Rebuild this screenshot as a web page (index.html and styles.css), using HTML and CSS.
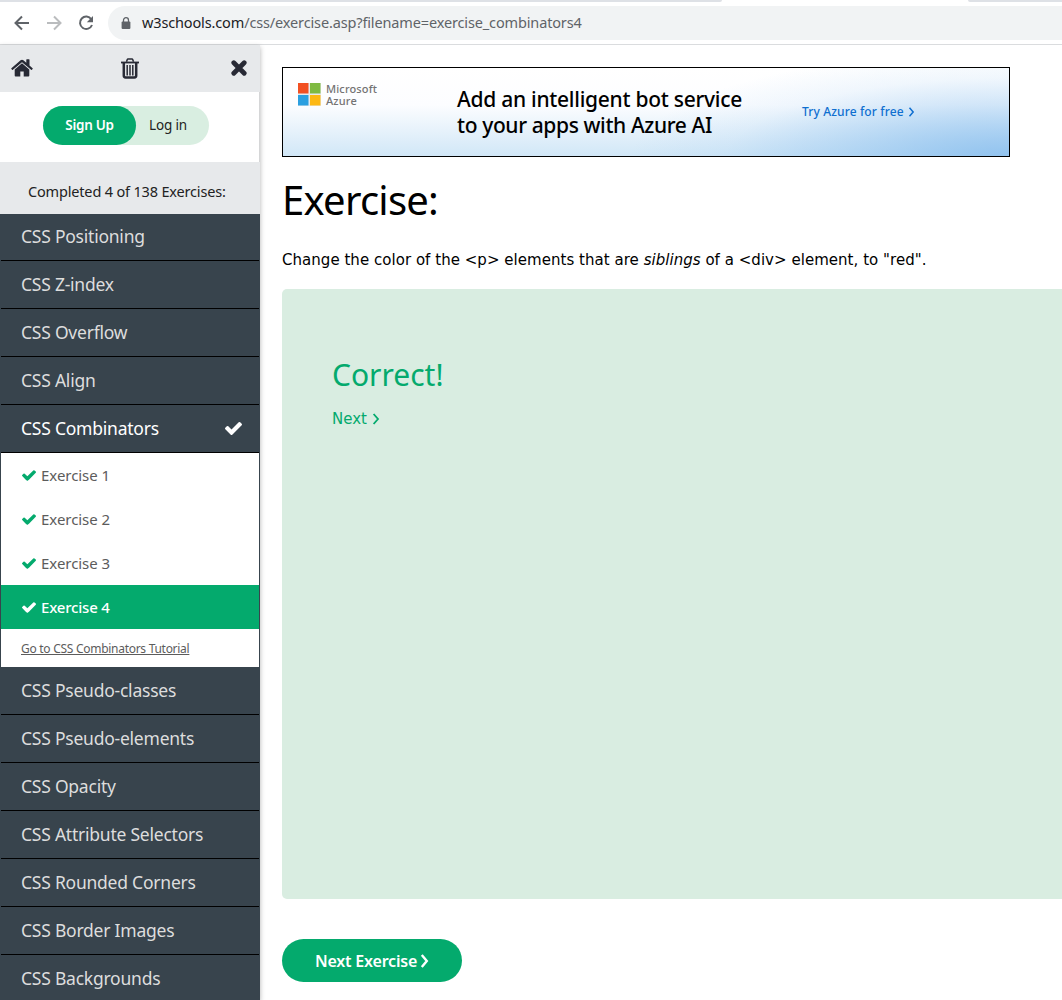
FILE: index.html
```html
<!DOCTYPE html>
<html lang="en">
<head>
<meta charset="utf-8">
<title>Exercise</title>
<link rel="stylesheet" href="styles.css">
</head>
<body>
<svg class="defs" width="0" height="0" aria-hidden="true">
  <symbol id="check" viewBox="0 0 1550 1188"><path d="M1550 232q0 40-28 68L798 1024l-136 136q-28 28-68 28t-68-28l-136-136L28 662Q0 634 0 594t28-68l136-136q28-28 68-28t68 28l294 295L1250 28q28-28 68-28t68 28l136 136q28 28 28 68z" fill="currentColor"/></symbol>
  <symbol id="chevron" viewBox="0 0 8 12"><path d="M1.6 1 6 6 1.6 11" fill="none" stroke="currentColor" stroke-width="1.8"/></symbol>
</svg>
<div class="tabstrip"><span class="tab-left"></span><span class="tab-right"></span></div>
<header class="toolbar">
  <div class="nav">
    <svg width="16" height="16" viewBox="0 0 16 16"><path d="M15 8H2M8 1.5 1.5 8 8 14.5" fill="none" stroke="#5f6368" stroke-width="2"/></svg>
    <svg width="16" height="16" viewBox="0 0 16 16"><path d="M1 8h13M8 1.5 14.5 8 8 14.5" fill="none" stroke="#babcbe" stroke-width="2"/></svg>
    <svg width="16" height="16" viewBox="0 0 16 16"><path d="M13.3 4.2A6.2 6.2 0 1 0 14 10" fill="none" stroke="#5f6368" stroke-width="2"/><path d="M15 1v6.2H8.8z" fill="#5f6368"/></svg>
  </div>
  <div class="address">
    <svg width="10" height="13" viewBox="0 0 10 13"><path d="M2.5 5V3.2a2.5 2.5 0 0 1 5 0V5" fill="none" stroke="#5f6368" stroke-width="1.3"/><rect x="0.6" y="4.5" width="8.8" height="7.5" rx="1" fill="#5f6368"/></svg>
    <span class="url"><b>w3schools.com</b>/css/exercise.asp?filename=exercise_combinators4</span>
  </div>
</header>
<div class="page">
  <aside class="sidebar">
    <div class="tools">
      <svg width="22" height="18" viewBox="0 0 22 18" fill="#282a35"><path d="M11 4.3 3.7 10.4v6.2q0 .9.9.9h4.7v-5h3.4v5h4.7q.9 0 .9-.9v-6.2z"/><path d="M21.6 9.2 18.5 6.6V.8q0-.5-.5-.5h-2.2q-.5 0-.5.5v3L12.4 1.2q-1.4-1.1-2.8 0L.4 9.2q-.4.4 0 .8l.7.8q.4.4.8 0L11 3.2l9.1 7.6q.4.4.8 0l.7-.8q.4-.4 0-.8z"/></svg>
      <svg class="trash" width="18" height="21" viewBox="0 0 18 21" fill="none" stroke="#282a35"><path d="M5.5 3.8 6.3 1.5q.2-.5.7-.5h4q.5 0 .7.5l.8 2.3" stroke-width="1.5"/><path d="M0 4.5h18" stroke-width="1.8"/><path d="M2.8 5v12.5q0 1.9 1.8 1.9h8.8q1.8 0 1.8-1.9V5" stroke-width="2.5"/><path d="M6.2 7v10.5M9 7v10.5M11.8 7v10.5" stroke-width="1.5"/></svg>
      <svg width="16" height="16" viewBox="0 0 16 16"><path d="M2.8 2.8 13.2 13.2M13.2 2.8 2.8 13.2" stroke="#282a35" stroke-width="4.8" stroke-linecap="round"/></svg>
    </div>
    <div class="account"><div class="pill"><span class="signup">Sign Up</span><span class="login">Log in</span></div></div>
    <div class="progress"><span>Completed 4 of 138 Exercises:</span></div>
    <nav class="menu">
      <a class="item first"><span>CSS Positioning</span></a>
      <a class="item"><span>CSS Z-index</span></a>
      <a class="item"><span>CSS Overflow</span></a>
      <a class="item"><span>CSS Align</span></a>
      <a class="item current"><span>CSS Combinators</span><svg width="17" height="13"><use href="#check"/></svg></a>
      <div class="sub">
        <a class="exercise"><svg width="14" height="11"><use href="#check"/></svg><span>Exercise 1</span></a>
        <a class="exercise"><svg width="14" height="11"><use href="#check"/></svg><span>Exercise 2</span></a>
        <a class="exercise"><svg width="14" height="11"><use href="#check"/></svg><span>Exercise 3</span></a>
        <a class="exercise active"><svg width="14" height="11"><use href="#check"/></svg><span>Exercise 4</span></a>
        <a class="tutorial">Go to CSS Combinators Tutorial</a>
      </div>
      <a class="item"><span>CSS Pseudo-classes</span></a>
      <a class="item"><span>CSS Pseudo-elements</span></a>
      <a class="item"><span>CSS Opacity</span></a>
      <a class="item"><span>CSS Attribute Selectors</span></a>
      <a class="item"><span>CSS Rounded Corners</span></a>
      <a class="item"><span>CSS Border Images</span></a>
      <a class="item"><span>CSS Backgrounds</span></a>
    </nav>
  </aside>
  <main class="content">
    <div class="ad">
      <div class="brand">
        <svg width="23" height="23" viewBox="0 0 23 23"><path d="M0 0h23v23H0z" fill="#e8eaec"/><path d="M0 0h10.5v10.5H0z" fill="#f25022"/><path d="M12 0h10.5v10.5H12z" fill="#7fba42"/><path d="M0 12h10.5v10.5H0z" fill="#2b9fe0"/><path d="M12 12h10.5v10.5H12z" fill="#fdb813"/></svg>
        <div class="brand-name">Microsoft<br>Azure</div>
      </div>
      <div class="pitch"><span class="pitch-1">Add an intelligent bot service</span><br><span class="pitch-2">to your apps with Azure AI</span></div>
      <a class="try"><span>Try Azure for free</span><svg width="7" height="10" viewBox="0 0 8 12"><use href="#chevron" width="8" height="12"/></svg></a>
    </div>
    <h1>Exercise:</h1>
    <p class="task">Change the color of the &lt;p&gt; elements that are <i>siblings</i> of a &lt;div&gt; element, to "red".</p>
    <section class="result">
      <h2>Correct!</h2>
      <a class="next"><span>Next</span><svg width="8" height="12"><use href="#chevron"/></svg></a>
    </section>
    <a class="button"><span>Next Exercise</span><svg width="9" height="14" viewBox="0 0 9 14"><path d="M1.8 1 6.8 7 1.8 13" fill="none" stroke="currentColor" stroke-width="2.4"/></svg></a>
  </main>
</div>
</body>
</html>
```
FILE: styles.css
```css
* { box-sizing: border-box; }
body { margin: 0; height: 1000px; overflow: hidden; background: #fff; color: #000; font-family: "Noto Sans", sans-serif; white-space: nowrap; }
svg { display: block; flex: none; }
.defs { position: absolute; }
.tabstrip { display: flex; justify-content: space-between; height: 2px; }
.tabstrip span { background: #dee1e6; }
.tab-left { width: 722px; border-bottom-right-radius: 2px; }
.tab-right { width: 94px; border-bottom-left-radius: 2px; }
.toolbar { display: flex; height: 43px; padding-top: 4px; border-bottom: 1px solid #dadcde; }
.nav { display: flex; gap: 16px; width: 108px; padding: 9px 0 0 14px; }
.address { display: flex; align-items: center; flex: 1; height: 34px; padding-left: 13px; background: #f1f3f4; border-radius: 17px 0 0 17px; }
.url { margin: -2px 0 0 11px; color: #5f6368; font-size: 14.5px; letter-spacing: -.14px; }
.url b { color: #202124; font-weight: 400; }
.page { display: flex; height: 955px; }
.sidebar { display: flex; flex-direction: column; width: 260px; flex: none; box-shadow: 0 2px 5px rgba(0,0,0,.3); }
.tools { display: flex; align-items: center; justify-content: space-between; height: 47px; padding: 0 13px 1px 11px; background: #e7e9eb; }
.trash { margin-right: 4px; }
.account { display: flex; height: 70px; padding: 14px 0 0 43px; border-right: 1px solid #d5d6d7; }
.pill { display: flex; align-items: center; width: 166px; height: 39px; background: #d9eee1; border-radius: 20px; font-size: 13.5px; }
.signup { width: 93px; height: 39px; line-height: 38px; background: #04aa6d; border-radius: 20px; color: #fff; text-align: center; font-weight: 600; letter-spacing: -.3px; }
.login { margin: -2px 0 0 13px; color: #222; letter-spacing: -.15px; }
.progress { height: 52px; padding: 3px 0 0 28px; background: #e7e9eb; line-height: 53px; font-size: 14.5px; letter-spacing: -.17px; color: #222; }
.menu { background: #38444d; padding: 0 1px; height: 786px; overflow: hidden; }
.item { display: flex; align-items: center; justify-content: space-between; height: 48px; padding: 0 18px 1px 20px; border-bottom: 1px solid #000; color: #ddd; font-size: 17.5px; letter-spacing: -.23px; }
.first { height: 47px; padding-bottom: 2px; }
.current { padding-right: 17px; color: #fff; }
.sub { background: #fff; }
.exercise { display: flex; align-items: center; gap: 5px; height: 44px; padding-left: 21px; color: #04aa6d; font-size: 15px; letter-spacing: -.05px; }
.exercise span { color: #5c5c5c; }
.exercise.active { background: #04aa6d; color: #fff; }
.exercise.active span { color: #fff; font-weight: 500; letter-spacing: -.2px; }
.tutorial { display: block; height: 38px; padding-left: 20px; line-height: 39px; color: #5c5c5c; font-size: 12px; letter-spacing: -.28px; text-decoration: underline; }
.content { flex: 1; min-width: 0; padding: 22px 0 0 22px; }
.ad { display: flex; width: 728px; height: 90px; border: 1px solid #000; background: radial-gradient(ellipse 380px 110px at 100% 105%, rgba(140,192,238,.95), rgba(140,192,238,.45) 45%, rgba(140,192,238,.12) 75%, rgba(140,192,238,0)), linear-gradient(#fff 0%, #fcfdff 42%, #d1e7f7 100%); }
.brand { display: flex; gap: 5px; width: 174px; padding: 15px 0 0 15px; }
.brand-name { color: #737373; font-size: 11px; line-height: 12px; font-weight: 500; letter-spacing: .15px; }
.pitch { width: 345px; padding-top: 18px; font-size: 21px; line-height: 26px; font-weight: 500; letter-spacing: -.27px; }
.pitch-2 { letter-spacing: -.38px; }
.try { display: flex; align-items: center; gap: 4px; height: 87px; color: #0f6fd0; font-size: 12px; font-weight: 500; letter-spacing: .13px; }
h1 { margin: 15px 0 0; font-size: 40px; font-weight: 400; line-height: 56px; letter-spacing: -.75px; }
.task { margin: 21px 0 0; font-family: "DejaVu Sans", sans-serif; font-size: 15px; line-height: 22px; letter-spacing: .035px; }
.result { margin-top: 18px; height: 610px; padding: 64px 50px; background: #d9ede1; border-radius: 5px 0 0 5px; color: #04aa6d; }
h2 { margin: 0; font-size: 30px; font-weight: 400; line-height: 43px; }
.next { display: flex; align-items: center; gap: 5px; margin-top: 12px; font-family: "DejaVu Sans", sans-serif; font-size: 15px; line-height: 22px; }
.button { display: flex; align-items: center; gap: 3px; width: 180px; height: 43px; margin-top: 40px; padding-left: 33px; border-radius: 22px; background: #04aa6d; color: #fff; font-size: 16px; font-weight: 600; letter-spacing: -.2px; }
```
